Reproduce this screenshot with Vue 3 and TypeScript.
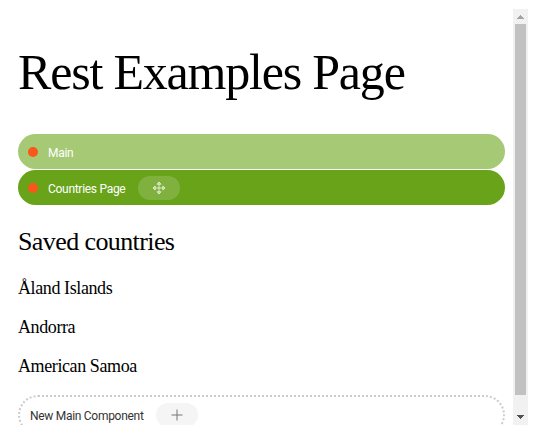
<script setup lang="ts">
interface Bar {
  name: string
  parent: boolean
}

const bars: Bar[] = [
  { name: 'Main', parent: true },
  { name: 'Countries Page', parent: false },
]
const countries: string[] = ['Åland Islands', 'Andorra', 'American Samoa']
</script>

<template>
  <div class="frame">
    <main class="content">
      <h1>Rest Examples Page</h1>
      <div v-for="bar in bars" :key="bar.name" class="bar" :class="{ parent: bar.parent }">
        <span class="dot"></span>
        <span class="label">{{ bar.name }}</span>
        <button v-if="!bar.parent" class="pill move" aria-label="Move">
          <svg width="14" height="14" viewBox="0 0 14 14" fill="none" stroke="currentColor" stroke-width="0.9">
            <path d="M7 1v12M1 7h12M5 3.2L7 1l2 2.2zM5 10.8L7 13l2-2.2zM3.2 5L1 7l2.2 2zM10.8 5L13 7l-2.2 2z" />
          </svg>
        </button>
      </div>
      <h2>Saved countries</h2>
      <p v-for="country in countries" :key="country">{{ country }}</p>
      <div class="placeholder">
        <span class="label">New Main Component</span>
        <button class="pill add" aria-label="Add">
          <svg width="12" height="12" viewBox="0 0 12 12" fill="none" stroke="currentColor" stroke-width="1">
            <path d="M6 .5v11M.5 6h11" />
          </svg>
        </button>
      </div>
    </main>
    <div class="scrollbar">
      <svg class="arrow" width="15" height="15" viewBox="0 0 15 15" shape-rendering="crispEdges">
        <path d="M7 6h1v1h1v1h1v1h1v1H4V9h1V8h1V7h1z" fill="#a3a3a3" />
      </svg>
      <div class="thumb"></div>
      <svg class="arrow" width="15" height="15" viewBox="0 0 15 15" shape-rendering="crispEdges">
        <path d="M4 5h7v1h-1v1H9v1H8v1H7V8H6V7H5V6H4z" fill="#505050" />
      </svg>
    </div>
  </div>
</template>

<style>
body {
  background: #fff;
}
</style>

<style scoped>
.frame {
  box-sizing: border-box;
  display: flex;
  width: 519px;
  height: 416px;
  margin: 9px 9px 0;
  overflow: hidden;
  color: #000;
  font-family: "Liberation Serif", serif;
}
.content {
  width: 487px;
  margin: 0 8px 0 9px;
  flex: none;
}
h1 {
  margin: 34px 0 32px;
  font-size: 50px;
  font-weight: 400;
  line-height: 59px;
  letter-spacing: -1.2px;
  white-space: nowrap;
}
.bar {
  display: flex;
  align-items: center;
  box-sizing: border-box;
  height: 35px;
  margin-bottom: 1px;
  padding: 0 10px;
  border-radius: 17.5px;
  background: #69a31a;
  color: #fff;
}
.bar.parent {
  background: #a5c975;
}
.dot {
  width: 10px;
  height: 10px;
  margin-right: 10px;
  border-radius: 50%;
  background: #f9571c;
}
.label {
  padding-top: 1px;
  font-family: Roboto, sans-serif;
  font-size: 12px;
  line-height: 18px;
  letter-spacing: -0.29px;
  white-space: nowrap;
}
.bar .label {
  padding-top: 2px;
}
.pill {
  display: flex;
  align-items: center;
  justify-content: center;
  width: 42px;
  height: 24px;
  margin: 0 0 0 12.4px;
  padding: 0;
  border: 0;
  border-radius: 12px;
}
.move {
  background: #80b13f;
  color: #e6f1d9;
}
h2 {
  margin: 22px 0 0;
  font-size: 26px;
  font-weight: 400;
  line-height: 30px;
  letter-spacing: -0.6px;
}
p {
  margin: 0 0 18px;
  font-size: 18px;
  line-height: 21px;
  letter-spacing: -0.4px;
}
h2 + p {
  margin-top: 21px;
}
.placeholder {
  display: flex;
  align-items: center;
  box-sizing: border-box;
  height: 40px;
  padding: 0 10px;
  border: 2px dotted #ccc;
  border-radius: 20px;
  color: #333;
}
.add {
  background: #f5f5f5;
  color: #777;
}
.scrollbar {
  display: flex;
  flex-direction: column;
  width: 15px;
  background: #f1f1f1;
}
.arrow {
  display: block;
  flex: none;
}
.thumb {
  height: 371px;
  margin: 0 2px auto;
  background: #c1c1c1;
}
</style>
